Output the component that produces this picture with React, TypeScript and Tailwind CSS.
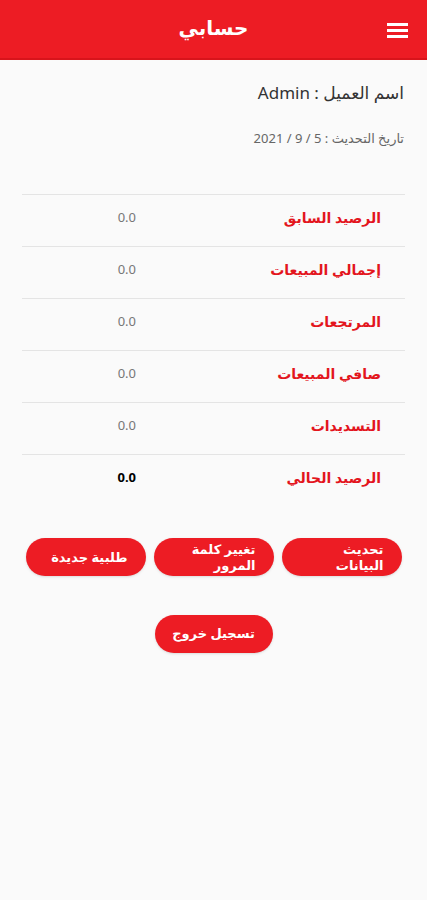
import React from 'react'

const ROWS = [
  { label: 'الرصيد السابق', value: '0.0' },
  { label: 'إجمالي المبيعات', value: '0.0' },
  { label: 'المرتجعات', value: '0.0' },
  { label: 'صافي المبيعات', value: '0.0' },
  { label: 'التسديدات', value: '0.0' },
  { label: 'الرصيد الحالي', value: '0.0', bold: true },
]

const BUTTONS = ['تحديث البيانات', 'تغيير كلمة المرور', 'طلبية جديدة']

export default function App() {
  return (
    <div
      dir="rtl"
      className="min-h-[900px] w-[427px] bg-[#fafafa]"
      style={{ fontFamily: '"Noto Sans", "DejaVu Sans", sans-serif' }}
    >
      {/* Header */}
      <header className="relative flex h-[60px] items-center justify-center border-b-2 border-[#d8141b] bg-[#ed1c24]">
        <button className="absolute right-[19px] top-[23px] flex w-[21px] flex-col gap-[3px]">
          <span className="h-[3px] w-full bg-white" />
          <span className="h-[3px] w-full bg-white" />
          <span className="h-[3px] w-full bg-white" />
        </button>
        <h1 className="-mt-[2px] text-[20px] font-bold text-white">حسابي</h1>
      </header>

      {/* Customer info */}
      <div className="px-[23px] pt-[20px]">
        <p className="text-[17px] leading-[26px] text-[#333]">
          اسم العميل : <span dir="ltr">Admin</span>
        </p>
        <p className="mt-[22px] text-[13px] leading-[20px] text-[#666]">
          تاريخ التحديث : <span dir="ltr">2021 / 9 / 5</span>
        </p>
      </div>

      {/* Balance table */}
      <div className="mx-[22px] mt-[46px]">
        {ROWS.map((r) => (
          <div
            key={r.label}
            className="flex h-[52px] items-start border-t border-[#e4e4e4] pt-[12px]"
          >
            <span className="w-[269px] pr-[24px] text-[14px] font-bold text-[#e3151d]">
              {r.label}
            </span>
            <span
              dir="ltr"
              className={`w-[100px] pt-[1px] text-right text-[13px] ${
                r.bold ? 'font-bold text-black' : 'text-[#777]'
              }`}
            >
              {r.value}
            </span>
          </div>
        ))}
      </div>

      {/* Actions */}
      <div className="mt-[32px] flex justify-center gap-[8px]">
        {BUTTONS.map((b) => (
          <button
            key={b}
            className="flex h-[38px] w-[120px] items-center rounded-full bg-[#ed1c24] px-[18px] text-right text-[13px] font-bold leading-[16px] text-white shadow-sm"
          >
            {b}
          </button>
        ))}
      </div>

      <div className="mt-[39px] flex justify-center">
        <button className="h-[38px] w-[118px] rounded-full bg-[#ed1c24] text-[13px] font-bold text-white shadow-sm">
          تسجيل خروج
        </button>
      </div>
    </div>
  )
}
